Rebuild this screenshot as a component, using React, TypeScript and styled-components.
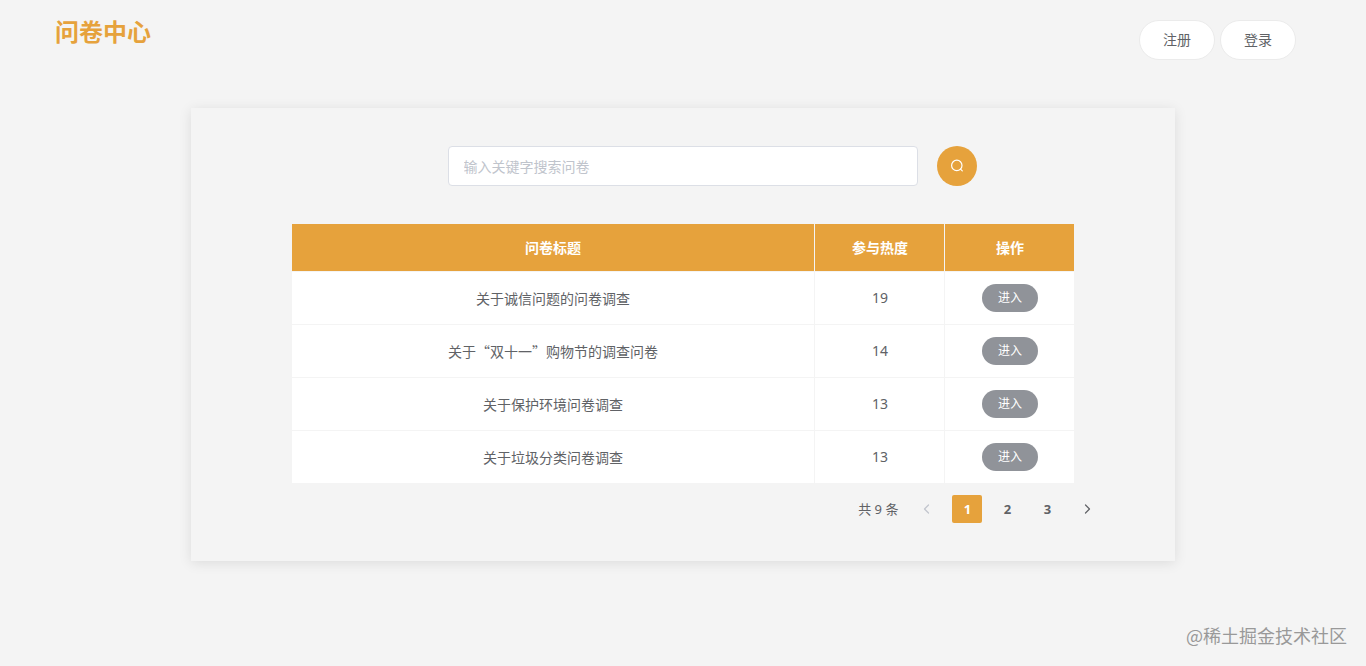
import React, { useState } from "react";
import styled, { createGlobalStyle } from "styled-components";

const cjk = `"Noto Sans CJK SC", sans-serif`;
const mixed = `"Noto Sans", "Noto Sans CJK SC", sans-serif`;

const GlobalStyle = createGlobalStyle`
  *, *::before, *::after { box-sizing: border-box; }
  body {
    margin: 0;
    background: #f4f4f4;
    color: #606266;
    font-family: ${mixed};
    font-size: 14px;
  }
  button, input { font-family: inherit; }
`;

const Page = styled.div`
  min-height: 100vh;
  display: flex;
  flex-direction: column;
`;

const Header = styled.header`
  display: flex;
  justify-content: space-between;
  align-items: flex-start;
  padding: 16px 70px 0 55px;
`;

const Brand = styled.h1`
  margin: 0;
  color: #e6a23c;
  font-size: 24px;
  line-height: 32px;
  font-weight: 700;
`;

const HeaderActions = styled.div`
  display: flex;
  gap: 5px;
  padding-top: 4px;
`;

const PillButton = styled.button`
  height: 40px;
  padding: 0 23px;
  border: 1px solid #ebebeb;
  border-radius: 20px;
  background: #fff;
  color: #606266;
  font-size: 14px;
  line-height: 20px;
  cursor: pointer;
`;

const Panel = styled.main`
  width: 72%;
  margin: 48px auto 0;
  padding: 38px 0 38px;
  box-shadow: 0 2px 12px rgba(0, 0, 0, 0.1);
`;

const Content = styled.div`
  width: 80%;
  max-width: 100%;
  margin: 0 auto;
  padding: 0 1px;
`;

const SearchForm = styled.form`
  display: grid;
  grid-template-columns: 1fr 60% 1fr;
  align-items: center;
`;

const SearchInput = styled.input`
  grid-column: 2;
  width: 100%;
  height: 40px;
  padding: 0 15px;
  border: 1px solid #dcdfe6;
  border-radius: 4px;
  background: #fff;
  color: #606266;
  font-size: 14px;
  &::placeholder { color: #c0c4cc; }
`;

const SearchButton = styled.button`
  width: 40px;
  height: 40px;
  margin-left: 19px;
  padding: 0;
  display: flex;
  align-items: center;
  justify-content: center;
  border: 0;
  border-radius: 50%;
  background: #e6a23c;
  color: #fff;
  cursor: pointer;
`;

const Table = styled.table`
  width: 100%;
  margin-top: 38px;
  table-layout: fixed;
  border-collapse: separate;
  border-spacing: 0;
  background: #fff;
  border-left: 1px solid #f4f4f4;
`;

const HeadCell = styled.th<{ $width?: string }>`
  width: ${(p) => p.$width ?? "auto"};
  height: 47px;
  padding: 0;
  background: #e6a23c;
  border-right: 1px solid #f4f4f4;
  color: #fff;
  font-size: 14px;
  line-height: 20px;
  font-weight: 700;
`;

const Cell = styled.td<{ $cjk?: boolean }>`
  height: 53px;
  padding: 0;
  border-right: 1px solid #f4f4f4;
  border-top: 1px solid #f4f4f4;
  text-align: center;
  font-family: ${(p) => (p.$cjk ? cjk : mixed)};
  font-size: 14px;
  line-height: 20px;
`;

const EnterButton = styled.button`
  height: 28px;
  padding: 0 16px;
  display: block;
  margin: 0 auto;
  border: 0;
  border-radius: 14px;
  background: #909399;
  color: #fff;
  font-size: 12px;
  line-height: 16px;
  cursor: pointer;
`;

const Pagination = styled.nav`
  display: flex;
  justify-content: flex-end;
  align-items: center;
  gap: 10px;
  margin: 12px -27px 0 0;
`;

const Total = styled.span`
  margin-right: 4px;
  font-size: 13px;
  line-height: 28px;
`;

const PageButton = styled.button<{ $active?: boolean }>`
  width: 30px;
  height: 28px;
  padding: 0;
  display: flex;
  align-items: center;
  justify-content: center;
  border: 0;
  border-radius: 2px;
  background: ${(p) => (p.$active ? "#e6a23c" : "transparent")};
  color: ${(p) => (p.$active ? "#fff" : "#606266")};
  font-size: 13px;
  font-weight: 700;
  cursor: pointer;
  &:disabled { color: #c0c4cc; cursor: not-allowed; }
`;

const Footer = styled.footer`
  margin-top: auto;
  padding: 0 19px 19px;
  text-align: right;
  color: #999;
  font-family: ${cjk};
  font-size: 18px;
  line-height: 24px;
`;

const surveys = [
  { title: "关于诚信问题的问卷调查", heat: 19 },
  { title: "关于“双十一”购物节的调查问卷", heat: 14 },
  { title: "关于保护环境问卷调查", heat: 13 },
  { title: "关于垃圾分类问卷调查", heat: 13 },
];

const pages = [1, 2, 3];

const SearchIcon = () => (
  <svg width="14" height="14" viewBox="0 0 14 14" fill="none" stroke="currentColor" strokeWidth="1.2" aria-hidden="true">
    <circle cx="6.8" cy="6.4" r="5.2" />
    <path d="M10.5 10.1 L12.3 11.9" strokeLinecap="round" />
  </svg>
);

const Chevron = ({ d }: { d: string }) => (
  <svg width="12" height="12" viewBox="0 0 12 12" fill="none" stroke="currentColor" strokeWidth="1.2" strokeLinecap="round" strokeLinejoin="round" aria-hidden="true">
    <path d={d} />
  </svg>
);

export default function App() {
  const [page, setPage] = useState(1);
  const [keyword, setKeyword] = useState("");

  return (
    <Page>
      <GlobalStyle />
      <Header>
        <Brand>问卷中心</Brand>
        <HeaderActions>
          <PillButton type="button">注册</PillButton>
          <PillButton type="button">登录</PillButton>
        </HeaderActions>
      </Header>
      <Panel>
        <Content>
          <SearchForm onSubmit={(e) => e.preventDefault()}>
            <SearchInput
              type="text"
              aria-label="输入关键字搜索问卷"
              placeholder="输入关键字搜索问卷"
              value={keyword}
              onChange={(e) => setKeyword(e.target.value)}
            />
            <SearchButton type="submit" aria-label="搜索">
              <SearchIcon />
            </SearchButton>
          </SearchForm>
          <Table>
            <thead>
              <tr>
                <HeadCell scope="col">问卷标题</HeadCell>
                <HeadCell scope="col" $width="130px">参与热度</HeadCell>
                <HeadCell scope="col" $width="130px">操作</HeadCell>
              </tr>
            </thead>
            <tbody>
              {surveys.map((s) => (
                <tr key={s.title}>
                  <Cell $cjk>{s.title}</Cell>
                  <Cell>{s.heat}</Cell>
                  <Cell>
                    <EnterButton type="button">进入</EnterButton>
                  </Cell>
                </tr>
              ))}
            </tbody>
          </Table>
          <Pagination aria-label="分页">
            <Total>共 9 条</Total>
            <PageButton type="button" aria-label="上一页" disabled={page === 1} onClick={() => setPage(page - 1)}>
              <Chevron d="M7.5 2 L3.5 6 L7.5 10" />
            </PageButton>
            {pages.map((n) => (
              <PageButton
                key={n}
                type="button"
                $active={n === page}
                aria-current={n === page ? "page" : undefined}
                onClick={() => setPage(n)}
              >
                {n}
              </PageButton>
            ))}
            <PageButton type="button" aria-label="下一页" disabled={page === pages.length} onClick={() => setPage(page + 1)}>
              <Chevron d="M4.5 2 L8.5 6 L4.5 10" />
            </PageButton>
          </Pagination>
        </Content>
      </Panel>
      <Footer>@稀土掘金技术社区</Footer>
    </Page>
  );
}
